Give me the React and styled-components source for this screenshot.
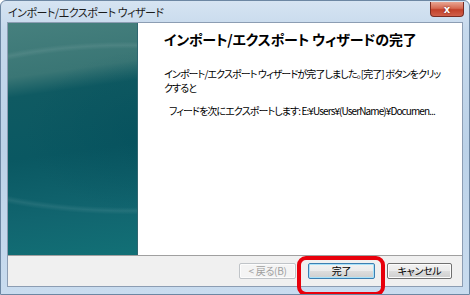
import React from 'react';
import styled, { createGlobalStyle } from 'styled-components';

const GlobalStyle = createGlobalStyle`
  html, body {
    margin: 0;
    padding: 0;
    background: #ffffff;
  }
  body {
    font-family: "Noto Sans CJK JP", "Noto Sans", sans-serif;
  }
`;

const Window = styled.div`
  position: relative;
  width: 470px;
  height: 295px;
  box-sizing: border-box;
  padding: 0 6px 7px 6px;
  border-radius: 6px 6px 0 0;
  border: 1px solid #6d87a3;
  background: linear-gradient(180deg, #d6e4f2 0%, #c6d9ec 10%, #bcd2e8 50%, #c9dcef 100%);
  display: flex;
  flex-direction: column;
  overflow: hidden;
`;

const TitleBar = styled.div`
  height: 21px;
  display: flex;
  align-items: center;
  justify-content: space-between;
`;

const Title = styled.span`
  font-size: 11px;
  color: #1a1a1a;
  font-feature-settings: "palt";
  letter-spacing: -0.5px;
  padding-left: 1px;
  margin-top: 1px;
`;

const CloseButton = styled.div`
  width: 34px;
  height: 15px;
  margin-top: -5px;
  margin-right: -1px;
  border-radius: 0 0 4px 4px;
  border: 1px solid #7a2c22;
  border-top: none;
  background: linear-gradient(180deg, #e8a592 0%, #d66a52 45%, #c2412a 55%, #d0604a 100%);
  display: flex;
  align-items: center;
  justify-content: center;
  color: #ffffff;
  font-family: "DejaVu Sans", sans-serif;
  font-weight: bold;
  font-size: 10px;
  text-shadow: 0 0 2px #6b1a10;
  padding-top: 2px;
  box-sizing: border-box;
`;

const Client = styled.div`
  flex: 1;
  border: 1px solid #8c9db3;
  display: flex;
  flex-direction: column;
  background: #f0f0f0;
`;

const Body = styled.div`
  height: 232px;
  display: flex;
`;

const Side = styled.div`
  width: 129px;
  border-right: 1px solid #2f6670;
  background:
    radial-gradient(ellipse 190px 120px at 150px 110px, rgba(0, 70, 85, 0.35) 0%, rgba(0, 70, 85, 0) 70%),
    radial-gradient(ellipse 260px 90px at 120px 105px, rgba(255, 255, 255, 0) 88%, rgba(255, 255, 255, 0.08) 92%, rgba(255, 255, 255, 0) 96%),
    linear-gradient(172deg, #46807e 0%, #3a7675 22%, #0f5a62 30%, #0a5862 55%, #11656f 80%, #127076 100%);
`;

const Content = styled.div`
  flex: 1;
  min-width: 0;
  background: #ffffff;
  padding: 6px 14px 0 26px;
  color: #000000;
`;

const Heading = styled.h1`
  margin: 0 0 18px 0;
  font-size: 14px;
  font-weight: bold;
  font-feature-settings: "palt";
  letter-spacing: -0.2px;
  line-height: 20px;
`;

const Paragraph = styled.p`
  margin: 0 0 ${p => p.$gap || 0}px 0;
  font-size: 10px;
  line-height: 14px;
  font-feature-settings: "palt";
  letter-spacing: -0.9px;
  padding-left: ${p => p.$indent || 0}px;
  white-space: nowrap;
`;

const Footer = styled.div`
  flex: 1;
  border-top: 1px solid #a0a0a0;
  display: flex;
  align-items: center;
  justify-content: flex-end;
  padding: 0 10px 0 0;
  gap: 12px;
`;

const Button = styled.button`
  width: ${p => p.$width}px;
  height: 16px;
  box-sizing: border-box;
  border-radius: 2px;
  border: 1px solid ${p => (p.$disabled ? '#c0c4c8' : p.$default ? '#3c7fb1' : '#707070')};
  background: ${p =>
    p.$disabled
      ? '#f4f4f4'
      : 'linear-gradient(180deg, #f2f2f2 0%, #ebebeb 48%, #dddddd 52%, #cfcfcf 100%)'};
  box-shadow: ${p => (p.$default ? 'inset 0 0 0 1px #a8e2fa' : 'inset 0 0 0 1px #fcfcfc')};
  color: ${p => (p.$disabled ? '#a0a0a0' : '#000000')};
  font-family: "Noto Sans CJK JP", "Noto Sans", sans-serif;
  font-feature-settings: "palt";
  font-size: 10px;
  line-height: 14px;
  padding: 0;
  letter-spacing: -0.3px;
`;

const Highlight = styled.div`
  position: absolute;
  left: 296px;
  top: 255px;
  width: 88px;
  height: 40px;
  box-sizing: border-box;
  border: 4px solid #e8000b;
  border-radius: 9px;
  pointer-events: none;
`;

export default function App() {
  return (
    <>
      <GlobalStyle />
      <Window>
        <TitleBar>
          <Title>インポート/エクスポート ウィザード</Title>
          <CloseButton>x</CloseButton>
        </TitleBar>
        <Client>
          <Body>
            <Side />
            <Content>
              <Heading>インポート/エクスポート ウィザードの完了</Heading>
              <Paragraph>
                インポート/エクスポート ウィザードが完了しました。[完了] ボタンをクリッ
              </Paragraph>
              <Paragraph $gap={9}>クすると</Paragraph>
              <Paragraph $indent={5}>
                フィードを次にエクスポートします: E:¥Users¥(UserName)¥Documen...
              </Paragraph>
            </Content>
          </Body>
          <Footer>
            <Button $width={57} $disabled>&lt; 戻る(B)</Button>
            <Button $width={67} $default>完了</Button>
            <Button $width={65}>キャンセル</Button>
          </Footer>
        </Client>
        <Highlight />
      </Window>
    </>
  );
}
